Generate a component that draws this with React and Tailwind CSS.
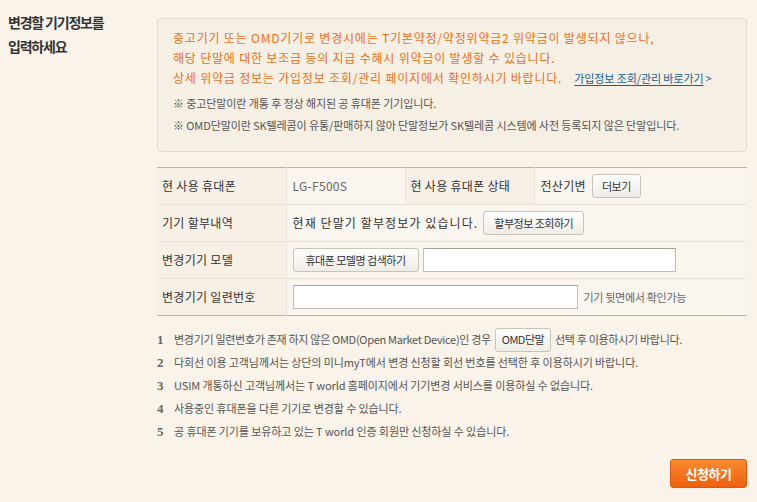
const FONT = { fontFamily: '"Noto Sans CJK KR", "Noto Sans", sans-serif' };

const NOTES = [
  { n: 1, text: null },
  { n: 2, text: '다회선 이용 고객님께서는 상단의 미니myT에서 변경 신청할 회선 번호를 선택한 후 이용하시기 바랍니다.' },
  { n: 3, text: 'USIM 개통하신 고객님께서는 T world 홈페이지에서 기기변경 서비스를 이용하실 수 없습니다.' },
  { n: 4, text: '사용중인 휴대폰을 다른 기기로 변경할 수 있습니다.' },
  { n: 5, text: '공 휴대폰 기기를 보유하고 있는 T world 인증 회원만 신청하실 수 있습니다.' },
];

function Btn({ children, className = '' }) {
  return (
    <button
      className={
        'h-[24px] shrink-0 flex items-center justify-center whitespace-nowrap rounded-[3px] border border-[#c9c3b9] bg-gradient-to-b from-white to-[#efece6] text-[11px] text-[#333] leading-none tracking-[-0.5px] ' +
        className
      }
    >
      {children}
    </button>
  );
}

function Input({ className = '' }) {
  return (
    <input
      className={
        'h-[24px] bg-white border border-[#c4beb4] border-t-[#a8a298] outline-none ' + className
      }
    />
  );
}

export default function App() {
  return (
    <div className="w-[757px] h-[502px] bg-[#f9f3ea] flex text-[#333] overflow-hidden" style={FONT}>
      {/* Left title */}
      <div className="w-[157px] shrink-0 pl-[8px] pt-[10px]">
        <h2 className="text-[14px] font-bold leading-[24px] tracking-[-1.2px] text-[#333]">
          변경할 기기정보를
          <br />
          입력하세요
        </h2>
      </div>

      {/* Right content */}
      <div className="flex-1 pr-[10px] pt-[18px]">
        {/* Notice box */}
        <div className="h-[134px] rounded-[4px] border border-[#e3dacd] bg-[#f6efe4] pl-[15px] pt-[9px]">
          <div className="text-[12px] leading-[20px] text-[#e8711c] tracking-[0.8px] whitespace-nowrap">
            <p>중고기기 또는 OMD기기로 변경시에는 T기본약정/약정위약금2 위약금이 발생되지 않으나,</p>
            <p>해당 단말에 대한 보조금 등의 지급 수혜시 위약금이 발생할 수 있습니다.</p>
            <p>
              상세 위약금 정보는 가입정보 조회/관리 페이지에서 확인하시기 바랍니다.
              <a className="ml-[12px] text-[11px] tracking-[-0.1px] text-[#17618f] underline underline-offset-2">
                가입정보 조회/관리 바로가기
              </a>
              <span className="ml-[2px] text-[11px] text-[#17618f]">&gt;</span>
            </p>
          </div>
          <div className="mt-[4px] text-[11px] leading-[22px] text-[#555] tracking-[-0.1px] whitespace-nowrap">
            <p>※ 중고단말이란 개통 후 정상 해지된 공 휴대폰 기기입니다.</p>
            <p>※ OMD단말이란 SK텔레콤이 유통/판매하지 않아 단말정보가 SK텔레콤 시스템에 사전 등록되지 않은 단말입니다.</p>
          </div>
        </div>

        {/* Table */}
        <table className="mt-[15px] w-full border-collapse border-t border-b border-t-[#b8b1a6] border-b-[#b8b1a6] text-[12px] tracking-[0.3px]">
          <colgroup>
            <col className="w-[129px]" />
            <col className="w-[119px]" />
            <col className="w-[129px]" />
            <col />
          </colgroup>
          <tbody>
            <tr className="h-[37px] border-b border-[#ebe3d7]">
              <th className="bg-[#f7f0e6] text-left font-normal pl-[5px] text-[#333]">현 사용 휴대폰</th>
              <td className="bg-[#faf5ee] pl-[6px] text-[#666] border-l border-[#ebe3d7]">LG-F500S</td>
              <th className="bg-[#f7f0e6] text-left font-normal pl-[5px] border-l border-[#ebe3d7] text-[#333]">현 사용 휴대폰 상태</th>
              <td className="bg-[#faf5ee] pl-[6px] border-l border-[#ebe3d7]">
                <div className="flex items-center gap-[6px] text-[#333]">
                  전산기변 <Btn className="w-[49px]">더보기</Btn>
                </div>
              </td>
            </tr>
            <tr className="h-[37px] border-b border-[#ebe3d7]">
              <th className="bg-[#f7f0e6] text-left font-normal pl-[5px]">기기 할부내역</th>
              <td colSpan={3} className="bg-[#faf5ee] pl-[6px] border-l border-[#ebe3d7]">
                <div className="flex items-center gap-[5px]">
                  <span className="tracking-[1.1px]">현재 단말기 할부정보가 있습니다.</span>
                  <Btn className="w-[101px]">할부정보 조회하기</Btn>
                </div>
              </td>
            </tr>
            <tr className="h-[37px] border-b border-[#ebe3d7]">
              <th className="bg-[#f7f0e6] text-left font-normal pl-[5px]">변경기기 모델</th>
              <td colSpan={3} className="bg-[#faf5ee] pl-[6px] border-l border-[#ebe3d7]">
                <div className="flex items-center gap-[4px]">
                  <Btn className="w-[126px]">휴대폰 모델명 검색하기</Btn>
                  <Input className="w-[253px]" />
                </div>
              </td>
            </tr>
            <tr className="h-[37px]">
              <th className="bg-[#f7f0e6] text-left font-normal pl-[5px]">변경기기 일련번호</th>
              <td colSpan={3} className="bg-[#faf5ee] pl-[6px] border-l border-[#ebe3d7]">
                <div className="flex items-center gap-[6px]">
                  <Input className="w-[285px]" />
                  <span className="text-[11px] text-[#666] tracking-[-0.3px]">기기 뒷면에서 확인가능</span>
                </div>
              </td>
            </tr>
          </tbody>
        </table>

        {/* Notes */}
        <ul className="mt-[12px] text-[11px] text-[#555] tracking-[-0.1px] whitespace-nowrap">
          {NOTES.map((note) => (
            <li key={note.n} className="flex items-center h-[23px]">
              <span
                className="w-[17px] text-[13px] font-bold text-[#666] tracking-normal"
                style={{ fontFamily: '"Liberation Serif", serif' }}
              >
                {note.n}
              </span>
              {note.text ? (
                <span>{note.text}</span>
              ) : (
                <span className="flex items-center tracking-[-0.3px]">
                  변경기기 일련번호가 존재 하지 않은 OMD(Open Market Device)인 경우
                  <Btn className="mx-[4px] w-[56px] h-[23px]">OMD단말</Btn>
                  선택 후 이용하시기 바랍니다.
                </span>
              )}
            </li>
          ))}
        </ul>

        <div className="flex justify-end mt-[16px]">
          <button className="w-[77px] h-[29px] rounded-[3px] border border-[#d95a0c] bg-gradient-to-b from-[#fa8a2e] to-[#ee5f0c] text-white text-[13px] font-bold tracking-[-0.5px]">
            신청하기
          </button>
        </div>
      </div>
    </div>
  );
}
